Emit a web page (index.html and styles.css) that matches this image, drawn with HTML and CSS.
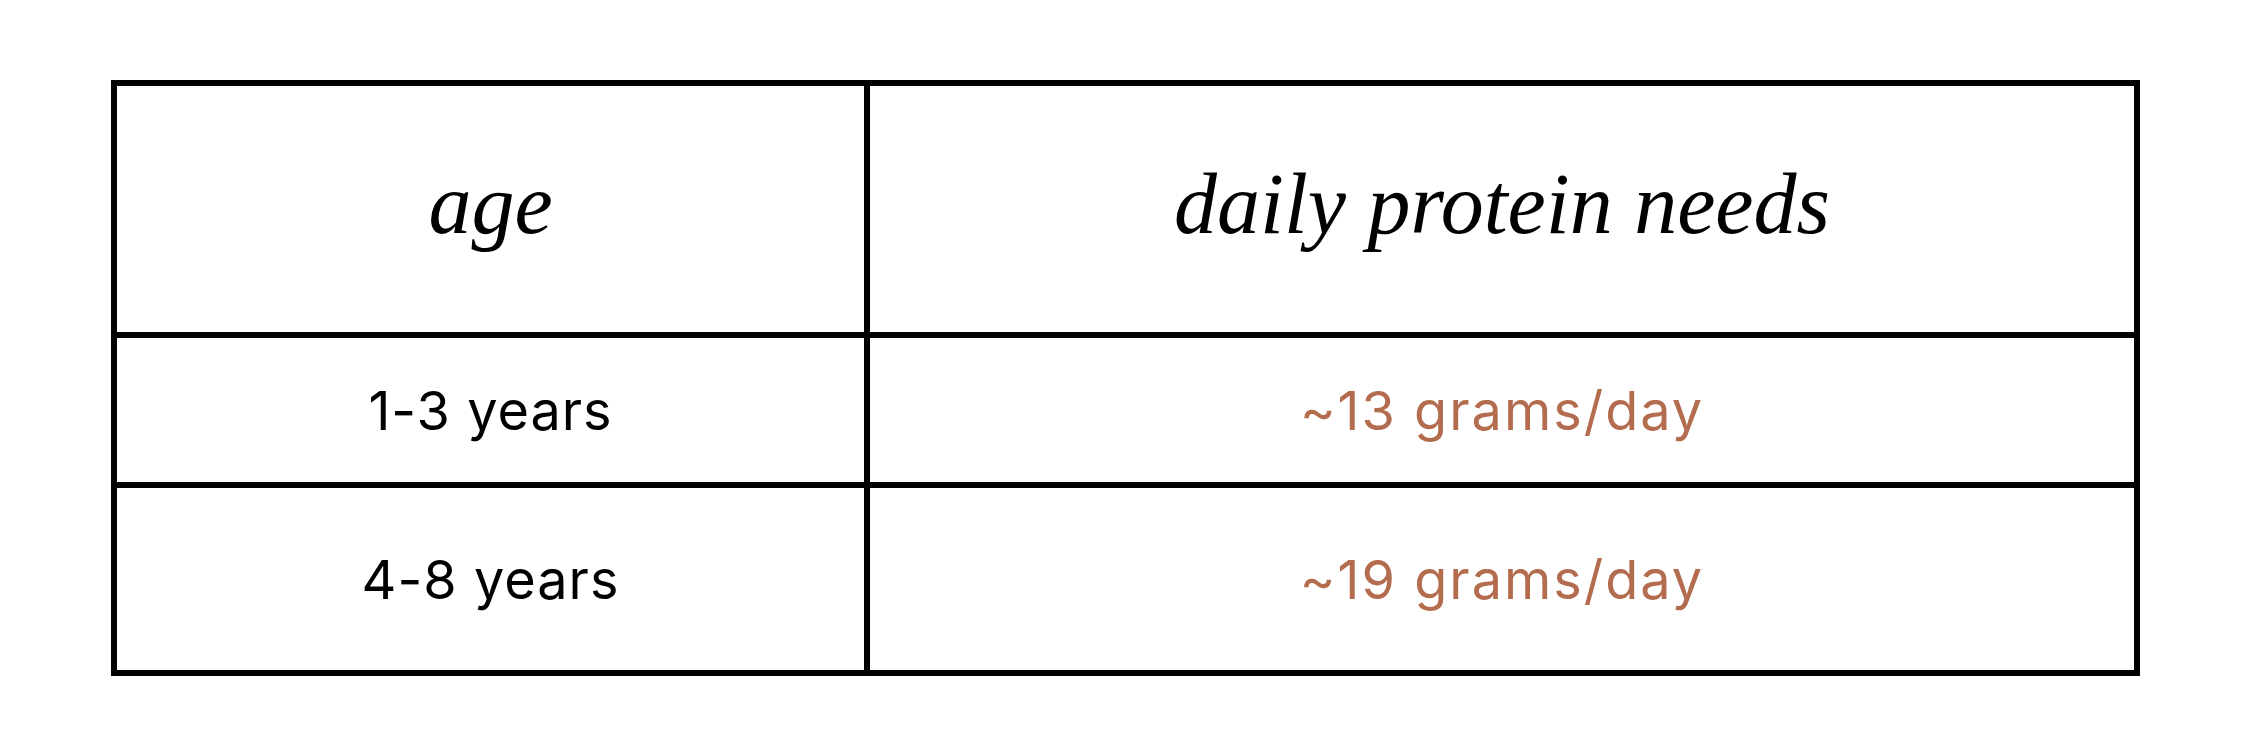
FILE: index.html
```html
<!DOCTYPE html>
<html>
<head>
<meta charset="utf-8">
<link rel="stylesheet" href="styles.css">
</head>
<body>
<div class="page">
  <div class="table">
    <div class="cell head">age</div>
    <div class="cell head">daily protein needs</div>
    <div class="cell age">1-3 years</div>
    <div class="cell amount">~13 grams/day</div>
    <div class="cell age">4-8 years</div>
    <div class="cell amount">~19 grams/day</div>
  </div>
</div>
</body>
</html>
```
FILE: styles.css
```css
html, body {
  margin: 0;
  padding: 0;
  background: #fff;
}
.page {
  width: 2250px;
  height: 747px;
  padding: 80px 0 0 111px;
  box-sizing: border-box;
}
.table {
  display: grid;
  grid-template-columns: 747px 1264px;
  grid-template-rows: 246px 144px 182px;
  gap: 6px;
  padding: 6px;
  background: #000;
  width: max-content;
}
.cell {
  background: #fff;
  display: flex;
  align-items: center;
  justify-content: center;
  font-family: "Inter", "Liberation Sans", sans-serif;
  font-size: 54px;
  letter-spacing: 1px;
  color: #000;
}
.head {
  font-family: "Liberation Serif", serif;
  font-style: italic;
  font-size: 86px;
  letter-spacing: 0;
  padding-bottom: 10px;
  box-sizing: border-box;
}
.amount {
  color: #b46c4f;
  letter-spacing: 2px;
}
```
